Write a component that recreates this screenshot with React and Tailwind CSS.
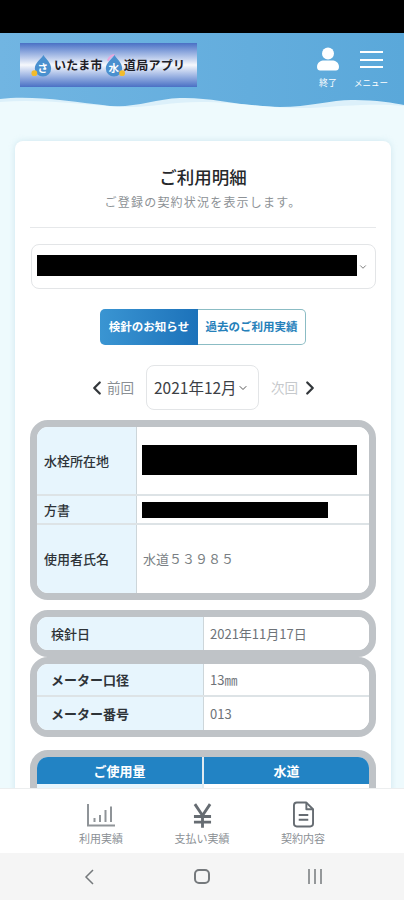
import React from 'react';
import { ChevronDown, ChevronLeft, ChevronRight } from 'lucide-react';

const FONT = '"Noto Sans CJK JP", "Noto Sans", sans-serif';

function Drop({ letter, dotX, arc, className }) {
  return (
    <svg viewBox="0 0 24 24" className={className}>
      {arc && <path d="M6 7 C8 3 11 1 13 1" fill="none" stroke="#e9a6dc" strokeWidth="2" />}
      <path d="M13 1 C16 6 21 9 21 15 a8.500 8.500 0 0 1-17 0 C4 9 10 6 13 1Z" fill="#4a90cf" />
      <circle cx={dotX} cy="20" r="3" fill="#f2bb2c" />
      <text x="12.500" y="19" textAnchor="middle" fontSize="11" fontWeight="700" fill="#fff">{letter}</text>
    </svg>
  );
}

function Logo() {
  return (
    <div className="w-[177px] h-[44px] flex items-center pl-[11px] bg-gradient-to-b from-[#4a70c4] via-[#f6f8fc] to-[#4a70c4]">
      <div className="flex items-center text-[12px] font-bold tracking-[0.3px] text-[#1e2027] whitespace-nowrap">
        <Drop letter="さ" dotX={3.5} className="w-[23px] h-[23px]" />
        <span>いたま市</span>
        <Drop letter="水" dotX={21} arc className="w-[23px] h-[23px] -ml-[1px] -mr-[1px]" />
        <span>道局アプリ</span>
      </div>
    </div>
  );
}

function Header() {
  return (
    <header className="relative h-[76px] shrink-0 bg-gradient-to-r from-[#71b5e2] to-[#5aa8da]">
      <div className="flex justify-between pl-[20px] pr-[15px] pt-[10px]">
        <Logo />
        <div className="flex text-white text-[9px] leading-none">
          <div className="flex flex-col items-center w-[40px] pt-[4px]">
            <svg viewBox="0 0 22 24" className="w-[22px] h-[24px]" fill="#fff">
              <circle cx="11" cy="6.500" r="6" />
              <path d="M0 20 C0 15 4 13.500 7 13.500 H15 C18 13.500 22 15 22 20 C22 22.500 20.500 23.500 19 23.500 H3 C1.500 23.500 0 22.500 0 20Z" />
            </svg>
            <span className="mt-[7px]">終了</span>
          </div>
          <div className="flex flex-col items-center w-[36px] ml-[5px] pt-[8px]">
            <div className="w-[23px] flex flex-col gap-[5.500px]">
              <div className="h-[2px] bg-white" />
              <div className="h-[2px] bg-white" />
              <div className="h-[2px] bg-white" />
            </div>
            <span className="mt-[10px] whitespace-nowrap text-[8.500px]">メニュー</span>
          </div>
        </div>
      </div>
      <svg viewBox="0 0 404 14" preserveAspectRatio="none" className="absolute left-0 bottom-0 w-full h-[14px]">
        <path d="M0 4 C30 0 70 6 110 11 C135 13 155 4 180 3 C215 2 240 12 280 12 C310 12 335 4 355 5 C375 5 395 8 404 10 V14 H0Z" fill="#dcf0fa" />
        <path d="M0 7 C40 4 75 9 120 12 C150 13 170 7 200 7 C240 7 270 14 310 13 C345 11 375 8 404 11 V14 H0Z" fill="#eefafd" />
      </svg>
    </header>
  );
}

function Frame({ className = '', children }) {
  return (
    <div className={`border-[7px] border-[#bfc3c7] rounded-[18px] overflow-hidden ${className}`}>
      {children}
    </div>
  );
}

function Row({ label, h, split = 'w-[100px]', pad = 'pl-[7px]', bold, border, children }) {
  return (
    <div className={`flex ${h} ${border ? 'border-b-2 border-[#dde3e6]' : ''}`}>
      <div className={`${split} ${pad} shrink-0 bg-[#e7f5fd] border-r border-[#cdd6da] flex items-center text-[13px] text-[#2e3338] ${bold ? 'font-bold' : 'font-medium'}`}>
        {label}
      </div>
      <div className="flex-1 bg-white flex items-center pl-[6px] text-[13px] text-[#6e7378]">{children}</div>
    </div>
  );
}

function Card() {
  return (
    <section className="ml-[15px] mt-[32px] w-[376px] h-[700px] bg-white rounded-t-[8px] shadow-[0_0_6px_rgba(150,200,215,0.35)] px-[15px] pt-[25px]">
      <h1 className="text-center text-[17.500px] leading-[22px] font-medium text-[#26282b]">ご利用明細</h1>
      <p className="text-center text-[12px] leading-[16px] mt-[6px] tracking-[1.2px] text-[#8d9296]">ご登録の契約状況を表示します。</p>
      <div className="h-px bg-[#e6e8ea] mt-[17px]" />

      <div className="mt-[16px] ml-px h-[45px] rounded-[8px] border border-[#e3e5e7] flex items-center pl-[5px]">
        <div className="w-[320px] h-[21px] -mt-[2px] bg-black" />
        <ChevronDown className="w-[10px] h-[10px] ml-[1px] text-[#666]" />
      </div>

      <div className="flex justify-center mt-[20px]">
        <div className="w-[98px] h-[36px] rounded-l-[5px] bg-gradient-to-r from-[#3a95d2] to-[#1c72ba] text-white text-[11.500px] font-bold flex items-center justify-center whitespace-nowrap">
          検針のお知らせ
        </div>
        <div className="w-[108px] h-[36px] rounded-r-[5px] border border-[#8bbcc4] border-l-0 text-[#2580ba] text-[11.500px] font-bold flex items-center justify-center whitespace-nowrap">
          過去のご利用実績
        </div>
      </div>

      <div className="flex items-center justify-center mt-[20px] ml-[1px]">
        <ChevronLeft className="w-[22px] h-[22px] text-[#33373b]" strokeWidth={2.500} />
        <span className="text-[13.500px] text-[#8a8f94] -ml-[1px] mr-[12px]">前回</span>
        <div className="w-[113px] h-[45px] rounded-[8px] border border-[#e3e5e7] flex items-center pl-[7px] text-[15.500px] text-[#3c4045] whitespace-nowrap">
          2021年12月
          <ChevronDown className="w-[12px] h-[12px] text-[#555]" />
        </div>
        <span className="text-[13.500px] text-[#c6c9cc] ml-[12px] mr-[1px]">次回</span>
        <ChevronRight className="w-[22px] h-[22px] text-[#33373b]" strokeWidth={2.500} />
      </div>

      <Frame className="mt-[10px]">
        <Row label="水栓所在地" h="h-[69px]" border>
          <div className="w-[215px] h-[30px] -mt-[2px] -ml-px bg-black" />
        </Row>
        <Row label="方書" h="h-[29px]" border>
          <div className="w-[186px] h-[16px] -ml-px bg-black" />
        </Row>
        <Row label="使用者氏名" h="h-[68px]">
          <span className="text-[#7a7f84]">水道５３９８５</span>
        </Row>
      </Frame>

      <Frame className="mt-[10px]">
        <Row label="検針日" h="h-[33px]" split="w-[167px]" pad="pl-[14px]">2021年11月17日</Row>
      </Frame>

      <Frame>
        <Row label="メーター口径" h="h-[33px]" split="w-[167px]" pad="pl-[14px]" bold border>13㎜</Row>
        <Row label="メーター番号" h="h-[33px]" split="w-[167px]" pad="pl-[14px]" bold>013</Row>
      </Frame>

      <Frame className="mt-[13px]">
        <div className="flex h-[27px] bg-[#2283c4] text-white text-[13px] font-bold text-center leading-[27px]">
          <div className="w-[167px] border-r-2 border-[#dfeaf0]">ご使用量</div>
          <div className="flex-1">水道</div>
        </div>
        <div className="flex h-[40px]">
          <div className="w-[167px] bg-[#e7f5fd] border-r-2 border-[#dfeaf0]" />
          <div className="flex-1 bg-white" />
        </div>
      </Frame>
    </section>
  );
}

function BottomTab({ label, children }) {
  return (
    <div className="flex flex-col items-center w-[101px]">
      <div className="h-[30px] flex items-end justify-center">{children}</div>
      <span className="mt-[3px] text-[11px] leading-[14px] text-[#8b9095]">{label}</span>
    </div>
  );
}

function BottomNav() {
  return (
    <nav className="h-[65px] shrink-0 bg-white border-t border-[#eceeef] flex justify-center pt-[9px]">
      <BottomTab label="利用実績">
        <svg viewBox="0 0 30 24" className="w-[30px] h-[24px] mb-[1px]" fill="none" stroke="#8f9498">
          <path d="M2 1 V22.500 H29" strokeWidth="2" />
          <path d="M8.500 15 V19 M14 12 V19 M19.500 7 V19 M25 3.500 V19" strokeWidth="2" />
        </svg>
      </BottomTab>
      <BottomTab label="支払い実績">
        <svg viewBox="0 0 20 26" className="w-[19px] h-[25px]" fill="none" stroke="#666c72" strokeWidth="3">
          <path d="M2 1 L10 13 L18 1 M10 13 V26 M1 14 H19 M1 20 H19" />
        </svg>
      </BottomTab>
      <BottomTab label="契約内容">
        <svg viewBox="0 0 22 27" className="w-[21px] h-[27px]" fill="none" stroke="#666c72" strokeWidth="2" strokeLinejoin="round">
          <path d="M4 1 H14 L21 8 V23 a3 3 0 0 1-3 3 H4 a3 3 0 0 1-3-3 V4 a3 3 0 0 1 3-3Z" />
          <path d="M14 1 V8 H21 M6 14 H16 M6 19 H16" />
        </svg>
      </BottomTab>
    </nav>
  );
}

function SystemNav() {
  return (
    <div className="h-[47px] shrink-0 bg-[#f5f5f5]">
      <div className="flex items-center justify-between h-full pl-[84px] pr-[81px]">
        <svg viewBox="0 0 10 16" className="w-[10px] h-[16px]" fill="none" stroke="#75797c" strokeWidth="1.500"><path d="M9 1 L2 8 L9 15" /></svg>
        <div className="w-[16px] h-[15px] rounded-[5px] border-2 border-[#75797c] ml-[2px]" />
        <svg viewBox="0 0 16 15" className="w-[16px] h-[15px]" stroke="#75797c" strokeWidth="1.500"><path d="M2 0 V15 M8 0 V15 M14 0 V15" /></svg>
      </div>
    </div>
  );
}

export default function App() {
  return (
    <div className="w-[404px] h-[900px] flex flex-col overflow-hidden bg-[#eefafd]" style={{ fontFamily: FONT }}>
      <div className="h-[33px] shrink-0 bg-black" />
      <Header />
      <main className="flex-1 min-h-0 overflow-hidden">
        <Card />
      </main>
      <BottomNav />
      <SystemNav />
    </div>
  );
}
